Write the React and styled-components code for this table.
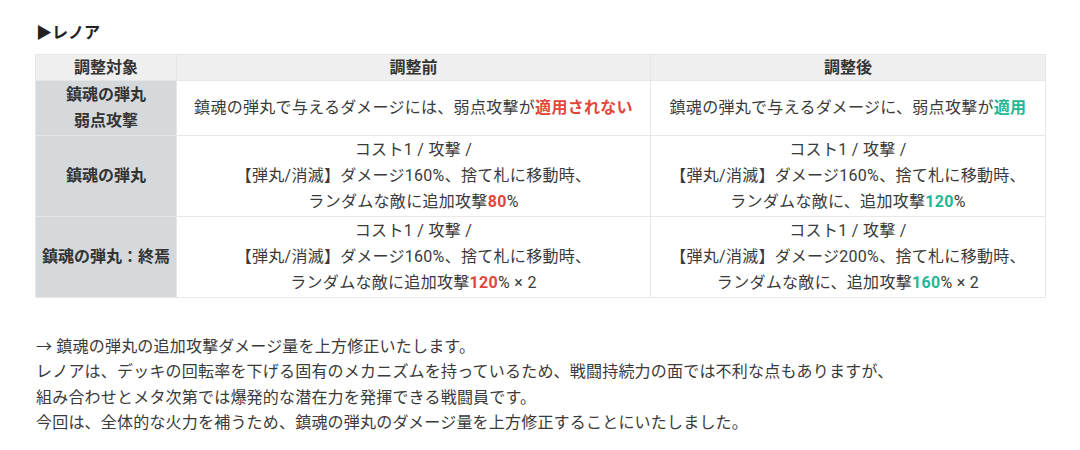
import React from "react"
import styled, { createGlobalStyle } from "styled-components"

const GlobalStyle = createGlobalStyle`
body {
  margin: 0;
  background: #ffffff;
  font-family: Roboto, "Noto Sans CJK JP", sans-serif;
  color: #333333;
}
`

const Page = styled.div`
  padding: 20px 35px 0 35px;
  width: 1010px;
`

const Heading = styled.div`
  font-size: 16px;
  font-weight: 700;
  line-height: 26px;
  color: #222222;
  margin-bottom: 8px;
  padding-left: 1px;
`

const Table = styled.table`
  width: 1010px;
  border-collapse: collapse;
  table-layout: fixed;
  font-size: 16px;
`

const Th = styled.th`
  background: #efefef;
  border: 1px solid #e6e6e6;
  font-weight: 700;
  line-height: 25px;
  padding: 0 8px;
  color: #333333;
`

const Label = styled.td`
  background: #d5d9dc;
  border: 1px solid #e6e6e6;
  font-weight: 700;
  text-align: center;
  line-height: 26px;
  padding: 1px 0;
  color: #333333;
`

const Cell = styled.td`
  border: 1px solid #e8e8e8;
  text-align: center;
  line-height: 26px;
  padding: 1px 6px;
  color: #3a3a3a;
  letter-spacing: 0.3px;
`

const Hi = styled.b`
  font-weight: 700;
  color: ${p => (p.up ? "#23b893" : "#e2463a")};
`

const Notes = styled.div`
  margin-top: 36px;
  font-size: 16px;
  line-height: 25.3px;
  color: #3a3a3a;
  padding-left: 1px;
  letter-spacing: 0.2px;
`

const App = () => {
  return (
    <Page>
      <GlobalStyle />
      <Heading>▶レノア</Heading>
      <Table>
        <colgroup>
          <col style={{ width: "141px" }} />
          <col style={{ width: "474px" }} />
          <col style={{ width: "395px" }} />
        </colgroup>
        <thead>
          <tr>
            <Th>調整対象</Th>
            <Th>調整前</Th>
            <Th>調整後</Th>
          </tr>
        </thead>
        <tbody>
          <tr>
            <Label>鎮魂の弾丸<br />弱点攻撃</Label>
            <Cell>鎮魂の弾丸で与えるダメージには、弱点攻撃が<Hi>適用されない</Hi></Cell>
            <Cell>鎮魂の弾丸で与えるダメージに、弱点攻撃が<Hi up>適用</Hi></Cell>
          </tr>
          <tr>
            <Label>鎮魂の弾丸</Label>
            <Cell>
              コスト1 / 攻撃 /<br />
              【弾丸/消滅】ダメージ160%、捨て札に移動時、<br />
              ランダムな敵に追加攻撃<Hi>80</Hi>%
            </Cell>
            <Cell>
              コスト1 / 攻撃 /<br />
              【弾丸/消滅】ダメージ160%、捨て札に移動時、<br />
              ランダムな敵に、追加攻撃<Hi up>120</Hi>%
            </Cell>
          </tr>
          <tr>
            <Label>鎮魂の弾丸：終焉</Label>
            <Cell>
              コスト1 / 攻撃 /<br />
              【弾丸/消滅】ダメージ160%、捨て札に移動時、<br />
              ランダムな敵に追加攻撃<Hi>120</Hi>% × 2
            </Cell>
            <Cell>
              コスト1 / 攻撃 /<br />
              【弾丸/消滅】ダメージ200%、捨て札に移動時、<br />
              ランダムな敵に、追加攻撃<Hi up>160</Hi>% × 2
            </Cell>
          </tr>
        </tbody>
      </Table>
      <Notes>
        → 鎮魂の弾丸の追加攻撃ダメージ量を上方修正いたします。<br />
        レノアは、デッキの回転率を下げる固有のメカニズムを持っているため、戦闘持続力の面では不利な点もありますが、<br />
        組み合わせとメタ次第では爆発的な潜在力を発揮できる戦闘員です。<br />
        今回は、全体的な火力を補うため、鎮魂の弾丸のダメージ量を上方修正することにいたしました。
      </Notes>
    </Page>
  )
}

export default App
